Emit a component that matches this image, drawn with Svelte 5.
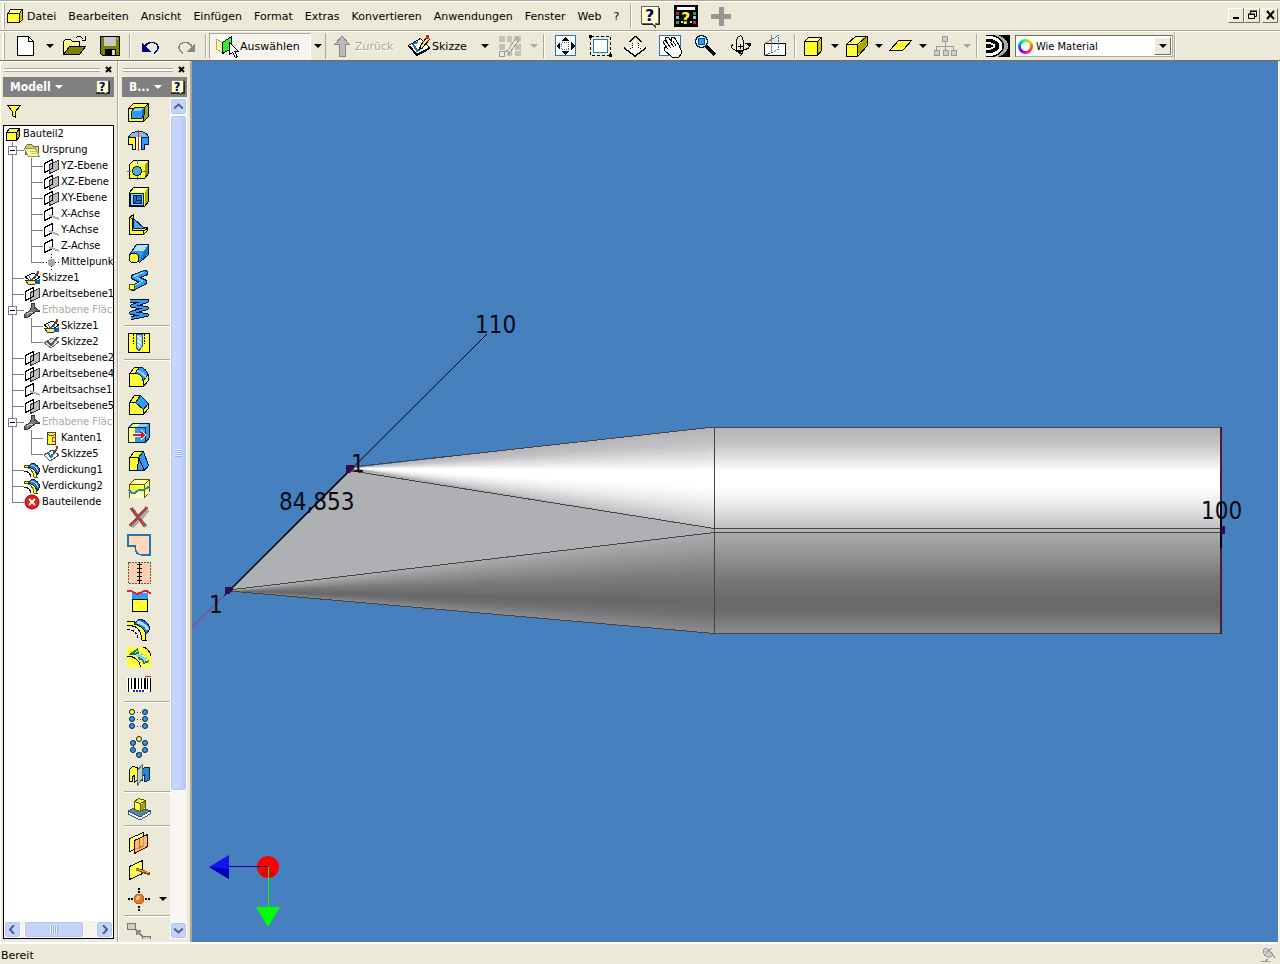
<script>
    const menus = ['Datei', 'Bearbeiten', 'Ansicht', 'Einfügen', 'Format', 'Extras', 'Konvertieren', 'Anwendungen', 'Fenster', 'Web', '?'];

    // 24x24 icons
    const icons = {
        part: '<path d="M3.5 9.5l4-5h13v11l-4 4h-13z" fill="#ff3" stroke="#000"/><path d="M8 5h11l-3 4H5z" fill="#ffffb0"/><path d="M17 10l3-4v9l-3 3z" fill="#c8c020"/><path d="M3.5 9.5h13v10M16.5 9.5l4-5" fill="none" stroke="#000"/>',
        newFile: '<path d="M3.5 2.5h11l5 5v14h-16z" fill="#fff" stroke="#000"/><path d="M14.5 2.5v5h5" fill="none" stroke="#000"/>',
        open: '<path d="M.5 20.5V7.5l2-2h5l2 2h7v5" fill="#ffff99" stroke="#000"/><path d="M.5 20.5l6-8h16l-6 8z" fill="#808000" stroke="#000"/><path d="M12.500 4.5c2-3 5-3 8 1M22.500 2v4h-4" fill="none" stroke="#000"/>',
        save: '<path d="M2.5 2.5h19v19h-17l-2-2z" fill="#808000" stroke="#000"/><path d="M6 3h12v9H6z" fill="#c8c8c8"/><path d="M7 15h11v6H7z" fill="#000"/><path d="M14 16h3v5h-3z" fill="#d8d8d8"/><path d="M19 4h1v1h-1z" fill="#fff"/>',
        undo: '<path d="M6 13c2-6 12-6 13 0 0 3-2 5-4 6" fill="none" stroke="#000080" stroke-width="1.500"/><path d="M3 9v9h9z" fill="#000080"/>',
        redo: '<path d="M18 13c-2-6-12-6-13 0 0 3 2 5 4 6" fill="none" stroke="#888" stroke-width="1.500"/><path d="M21 9v9h-9z" fill="#888"/>',
        select: '<path d="M1 5l7 4v10l-7-4z" fill="#ffff90" stroke="#aa9"/><path d="M2 4l8-3 6 3-8 4z" fill="#fff"/><path d="M7.500 8.500l9-6v12l-9 5z" fill="#3e3" stroke="#000"/><path d="M14.500 8.500v12l3-2 3 5 2-1-3-5h4z" fill="#fff" stroke="#000"/>',
        back: '<path d="M12 2l7 8h-4v12H9V10H5z" fill="#bbb" stroke="#888"/>',
        sketch: '<path d="M1.500 11.500l12-7 9 9-13 7z" fill="#fff" stroke="#000"/><path d="M2 12l8 9 13-7" fill="none" stroke="#000" stroke-width="2"/><path d="M6 10l4 7 6-4M6 10l5-2" fill="none" stroke="#27a" stroke-width="2"/><path d="M12.500 15.500l1-4 6-8 3 2-7 8z" fill="#ffe640" stroke="#000"/><path d="M19 1h3v4h-3z" fill="#c22"/>',
        sketchOff: '<path d="M1 2h6v6H1zM9 2h5v6H9zM1 10h6v6H1zM17 10h6v6h-6zM9 17h5v5H9zM17 17h6v5h-6zM16 2h7v5h-7z" fill="#c4c2b8"/><path d="M1.500 17.500h5v5h-5zM6 18c8-1 4-9 15-15M10 21L22 5" fill="none" stroke="#999"/>',
        fit: '<path d="M2.500 1.500h20v20h-20z" fill="#fff" stroke="#27b"/><path d="M12 3l4 4H8zM12 21l4-4H8zM3 12l4-4v8zM22 12l-4-4v8z" fill="#000"/><path d="M8.500 8.500h7v7h-7z" fill="#fff" stroke="#27b" stroke-dasharray="1 1"/>',
        zoomWindow: '<path d="M2.500 2.500h20v19h-20z" fill="none" stroke="#000" stroke-dasharray="3 2"/><path d="M5.500 5.500h14v13h-14z" fill="#fff" stroke="#27b"/><path d="M1 1h3v3H1zM21 20h3v3h-3z" fill="#000"/>',
        zoomLive: '<path d="M1 14l8-2 3-7 3 7 8 2-11 8z" fill="#fff"/><path d="M12.500 2l6 6M12.500 2l-6 6" fill="none" stroke="#000"/><path d="M9.500 9v4l-2 2M15.500 9v4l2 2" fill="none" stroke="#000" stroke-dasharray="1 1"/><path d="M1 14l11 8 11-8" fill="none" stroke="#000" stroke-width="1.500"/>',
        pan: '<path d="M1.500 1.500h21v20h-21z" fill="#fff" stroke="#27b"/><path d="M5 8l2-2 3 4-3-6 3-1 4 5-1-4 3-1 5 8 3 8-3 4h-7L6 16v-3l3 1z" fill="#fff" stroke="#000"/><path d="M9 9l4 5M12 8l4 5M15 7l3 5" stroke="#000"/>',
        zoomSel: '<path d="M13 12l9 9" stroke="#000" stroke-width="4"/><circle cx="8.500" cy="7.500" r="6" fill="#e8f4ff" stroke="#024" stroke-width="1.500"/><path d="M5.500 4.500h6v6h-6z" fill="#39f" stroke="#04a"/>',
        orbit: '<path d="M9 18C7 8 9 1 13 2c3 2 4 17-1 20M5 10c-7 8 14 9 17 2 1-2-2-3-5-3" fill="none" stroke="#000"/><path d="M12.500 10v5M10 12.500h5" stroke="#000"/><path d="M14 17l-6-1 4 5zM18 9h5l-2 4z" fill="#000"/>',
        lookAt: '<path d="M1.500 9.500h21v12h-21z" fill="#fff" stroke="#000"/><path d="M1.500 9.500l14-8v14l-14 6" fill="none" stroke="#27b" stroke-dasharray="2 1"/><path d="M8.500 18V1M1 10l8-5" fill="none" stroke="#888"/>',
        cube: '<path d="M3.500 7.500l4-4h13v13l-4 5h-13z" fill="#ff3" stroke="#000"/><path d="M17 8l3-4v12l-3 4z" fill="#c8c020"/><path d="M8 4h11l-3 3H5z" fill="#ffffb0"/><path d="M3.500 7.500h13v13M16.500 7.500l4-4" fill="none" stroke="#000"/>',
        cubePersp: '<path d="M1.500 10.500l9-8h12v9l-10 11h-11z" fill="#ff3" stroke="#000"/><path d="M13 11l9-8v8l-9 10z" fill="#b0a800"/><path d="M11 3h10l-9 7H4z" fill="#ffff80"/><path d="M1.500 10.500h11v11M12.500 10.500l9-8" fill="none" stroke="#000"/>',
        plane: '<path d="M1 16l9-10h13l-9 10z" fill="#ff3" stroke="#000"/>',
        tree: '<path d="M9.500 2.500h5v5h-5zM1.500 16.500h5v5h-5zM10.500 16.500h5v5h-5zM18.500 16.500h5v5h-5z" fill="#ccc" stroke="#999"/><path d="M12.500 7v9M3.500 16v-4h17v4" fill="none" stroke="#999"/>',
        zebra: '<path d="M0 1h24v22H0z" fill="#000"/><path d="M0 3c9 0 15 4 15 9s-6 9-15 9" fill="none" stroke="#fff" stroke-width="3"/><path d="M0 9c5 0 8 1 8 3s-3 3-8 3" fill="none" stroke="#fff" stroke-width="2"/><path d="M12 1c8 3 10 7 10 11s-2 8-10 11h-4c8-3 10-7 10-11S16 4 8 1z" fill="#aaa"/>',
        help: '<path d="M3 4h18v17h-4v3l-4-3H3z" fill="#222"/><path d="M2.500 2.500h17v17h-3v3l-3-3h-11z" fill="#ffffd0" stroke="#666"/><text x="6" y="17" font-family="DejaVu Sans, sans-serif" font-size="16" font-weight="bold" fill="#006">?</text>',
        tutor: '<path d="M0 1h24v22H0z" fill="#000"/><path d="M3 3h18v3H3z" fill="#fff"/><path d="M2 8h3v3H2z" fill="#c22"/><path d="M2 12h3v3H2zM19 12h3v3h-3z" fill="#9bd"/><path d="M2 17h3v3H2zM19 8h3v3h-3z" fill="#2a3"/><path d="M19 17h3v3h-3z" fill="#c22"/><path d="M7 17h2v2H7zM16 17h2v2h-2z" fill="#cdc"/><text x="7" y="20" font-family="DejaVu Sans, sans-serif" font-size="16" font-weight="bold" fill="#ff0">?</text>',
        plus: '<path d="M10 3h5v7h7v5h-7v7h-5v-7H2v-5h8z" fill="#959595"/>',
        extrude: '<path d="M1.500 7.500l5-5h15v13l-5 5h-15z" fill="#ff3" stroke="#000"/><path d="M17 8l4-5v12l-4 4z" fill="#b0a800"/><path d="M1.500 7.500h15v13M16.500 7.500l5-5" fill="none" stroke="#000"/><path d="M4.500 10.500l3-4h10v7l-3 4h-10z" fill="#39f" stroke="#024"/><path d="M6 10l2-3h8l-2 3z" fill="#9cf"/><path d="M15 10l2-3v6l-2 3z" fill="#16b"/>',
        revolve: '<path d="M1.500 8.500c3-8 18-8 20 0l-5 2h-10z" fill="#8bd" stroke="#024"/><path d="M1.500 8.500h7v12h-3v-5h-4z" fill="#ff3" stroke="#000"/><path d="M14.500 8.500h7v7h-4v5h-3z" fill="#39f" stroke="#024"/><path d="M9 8h5v12H9z" fill="#fff"/><path d="M11.500 1v21" stroke="#d22"/>',
        hole: '<path d="M2.500 7.500l4-4h15v13l-4 5h-15z" fill="#ff3" stroke="#000"/><path d="M18 8l3-4v12l-3 4z" fill="#a89800"/><path d="M7 4h13l-3 3H4z" fill="#ffffb0"/><path d="M10 3v20M0 14h20" stroke="#27b" stroke-dasharray="4 12"/><circle cx="10" cy="14" r="4.500" fill="#5ad" stroke="#024"/>',
        shell: '<path d="M2.500 7.500l4-5h15v14l-4 5h-15z" fill="#ff3" stroke="#000"/><path d="M18 8l3-5v13l-3 4z" fill="#b0a800"/><path d="M7 3h13l-3 4H4z" fill="#ffffb0"/><path d="M3.500 8.500h13v12h-13z" fill="#9cf" stroke="#024"/><path d="M6.500 10.500h8v8h-8z" fill="#17c" stroke="#024"/><path d="M9.500 11v4.500H14M7 18l3-3" fill="none" stroke="#013"/>',
        rib: '<path d="M2.500 4.500l4-3v12l14 1v3l-4 4h-14z" fill="#ff3" stroke="#000"/><path d="M6.500 5.500v10h11z" fill="#4af" stroke="#024"/><path d="M2.500 4.500l3 1v12h11v4M17 18l4-3" fill="none" stroke="#000"/>',
        loft: '<path d="M2.500 13.500l7-10h12v10l-9 8z" fill="#39e" stroke="#024"/><path d="M10 4h11l-4 6H6z" fill="#bdf"/><path d="M17 10l4-6v9l-8 7z" fill="#17b"/><circle cx="7" cy="17" r="5" fill="#ff3" stroke="#000"/>',
        sweep: '<path d="M6 19L17 13 7 8 18 4" fill="none" stroke="#024" stroke-width="6" stroke-linejoin="round" stroke-linecap="round"/><path d="M6 19L17 13 7 8 18 4" fill="none" stroke="#39e" stroke-width="4" stroke-linejoin="round" stroke-linecap="round"/><path d="M7 17l9-5L7 7l10-4" fill="none" stroke="#9cf"/><circle cx="5" cy="18" r="3" fill="#ff3" stroke="#550"/>',
        coil: '<path d="M3 4h17L5 9l15 2L4 16l16 2-16 3" fill="none" stroke="#013" stroke-width="4" stroke-linejoin="round"/><path d="M3 4h17L5 9l15 2L4 16l16 2-16 3" fill="none" stroke="#39e" stroke-width="2" stroke-linejoin="round"/>',
        thread: '<path d="M1.500 2.500h21v19h-21z" fill="#ff3" stroke="#000"/><path d="M9 3h6v13l-3 4-3-4z" fill="#9cf" stroke="#259"/><path d="M6.500 3v10M17.500 3v10" stroke="#000" stroke-dasharray="2 1"/><path d="M10 5h1v1h1v1h1v1h1M10 9h1v1h1v1h1v1h1M10 13h1v1h1v1h1" fill="none" stroke="#fff"/>',
        fillet: '<path d="M2.500 8.500l5-6h6c4 1 7 4 8 8v5l-5 6h-14z" fill="#ff3" stroke="#000"/><path d="M8 8l5-6c4 1 7 4 8 8l-5 6c0-4-3-7-8-8z" fill="#39e" stroke="#024"/><path d="M10 6c5 1 8 4 9 7" fill="none" stroke="#9cf" stroke-width="2"/><path d="M16.500 16v5M2.500 8.500h5" stroke="#000"/>',
        chamfer: '<path d="M2.500 9.500l5-7h6l8 9v4l-5 6h-14z" fill="#ff3" stroke="#000"/><path d="M8.500 9.500l5-7 8 8-5 6z" fill="#39f" stroke="#024"/><path d="M16.500 16v5M2.500 9.500h6" stroke="#000"/>',
        moveFace: '<path d="M1.500 6.500l4-4h17v14l-4 5h-17z" fill="#39e" stroke="#024"/><path d="M2 7l4-4h6L8 7v14H2z" fill="#ffff70"/><path d="M8 7l4-4h9l-3 4z" fill="#8cf"/><path d="M1.500 6.500h17v15" fill="none" stroke="#024"/><path d="M5 12h9V9l6 5-6 5v-3H5z" fill="#fff"/><path d="M6 14h11M14 11l3 3-3 3" fill="none" stroke="#c22" stroke-width="2"/>',
        draft: '<path d="M2.500 8.500l5-6h9l5 14-4 5h-15z" fill="#ff3" stroke="#000"/><path d="M11.500 8.500l5-6 5 14-4 5h-7z" fill="#39f" stroke="#024"/><path d="M2.500 8.500h9l-1 13M11.500 8.500l6 13" fill="none" stroke="#000"/>',
        split: '<path d="M2.500 7.500l5-5h15v12l-5 6h-15z" fill="#ff3" stroke="#550"/><path d="M3 15h15l4-4v4l-5 6H3z" fill="#ffffc0"/><path d="M8 3h13l-4 4H4z" fill="#ffffb0"/><path d="M2.500 7.500h15v13M17.500 7.500l4-4" fill="none" stroke="#550"/><path d="M2 13c4 5 5 4 8 1s6 2 12-5" fill="none" stroke="#28c" stroke-width="2"/>',
        remove: '<path d="M5 4l14 18M21 5L5 22" stroke="#aaa" stroke-width="4"/><path d="M4 3l14 18M20 2L3 21" stroke="#a84848" stroke-width="3"/>',
        patch: '<path d="M1 2h22v20h-8c-6 0-7-4-7-9H1z" fill="#ffd8bc" stroke="#27a" stroke-width="1.500"/>',
        stitch: '<path d="M1.500 1.500h22v21h-22z" fill="#ffd0b0" stroke="#654" stroke-dasharray="2 1"/><path d="M12.500 1v22" stroke="#000"/><path d="M10 3.500h5M10 7.500h5M10 11.500h5M10 15.500h5M10 19.500h5" stroke="#000"/>',
        replaceFace: '<path d="M5 4h16v7H5z" fill="#39f"/><path d="M5.500 10.500h15v12h-15z" fill="#ff3" stroke="#000"/><path d="M0 2c8-1 7 5 13 2 5-3 7-3 11 1" fill="none" stroke="#d22" stroke-width="2"/>',
        thicken: '<path d="M0 9c9-2 14 4 15 14h4C19 11 14 3 0 5" fill="#ff3" stroke="#000"/><path d="M7 7l5-5c6 1 10 5 11 10l-4 5C17 12 13 8 7 7z" fill="#27d" stroke="#024"/><path d="M10 5c6 1 10 5 11 8" fill="none" stroke="#adf" stroke-width="3"/><path d="M0 13c7-1 10 3 11 9" fill="none" stroke="#000" stroke-dasharray="3 1"/>',
        emboss: '<path d="M0 2h16c4 1 7 5 8 9v11H0z" fill="#ff3"/><path d="M0 11c7 0 12 4 14 11M16 2c4 1 7 5 8 9" fill="none" stroke="#000"/><path d="M11 4L4 9h5l3-2M11 11l2 3 4-1M15 14l2 4 5-2" fill="none" stroke="#178" stroke-width="2"/><path d="M9 10l6 2 4 4M16 9l-4 1M20 13l-4 1" fill="none" stroke="#8cf" stroke-width="2"/>',
        barcode: '<path d="M0 5h24v14H0z" fill="#fff"/><path d="M1 5h1v14H1zM4 5h1v11H4zM7 5h2v11H7zM11 5h1v11h-1zM14 5h1v11h-1zM17 5h2v11h-2zM20 5h1v11h-1zM23 5h1v14h-1z" fill="#000"/><path d="M6 17h2v2H6zM9 17h2v2H9zM12 17h2v2h-2zM15 17h2v2h-2z" fill="#22c"/><path d="M18 3h6v1h-6z" fill="#c22"/>',
        rectPattern: '<path d="M7 5h9M7 12h9M7 19h9" stroke="#c22" stroke-dasharray="1 2"/><g fill="#39e" stroke="#024" shape-rendering="auto"><circle cx="5" cy="5" r="2.500" fill="#ff3"/><circle cx="18" cy="5" r="2.500"/><circle cx="5" cy="12" r="2.500"/><circle cx="18" cy="12" r="2.500"/><circle cx="5" cy="19" r="2.500"/><circle cx="18" cy="19" r="2.500"/></g>',
        circPattern: '<path d="M12 4l6 4v7l-6 5-6-5V8z" fill="none" stroke="#c22" stroke-dasharray="1 2"/><g fill="#39e" stroke="#024" shape-rendering="auto"><circle cx="12" cy="4" r="2.500" fill="#ff3"/><circle cx="18" cy="8" r="2.500"/><circle cx="18" cy="15" r="2.500"/><circle cx="12" cy="20" r="2.500"/><circle cx="6" cy="15" r="2.500"/><circle cx="6" cy="8" r="2.500"/></g>',
        mirror: '<path d="M2.500 6.500l3-3 5 1v12l-3 3v-7l-2 1v5h-3z" fill="#ff3" stroke="#000"/><path d="M14.500 6.500l3-2h5v12l-3 2h-2v-7l-2 2v4h-2z" fill="#28d" stroke="#024"/><path d="M10 8l5-6v14l-5 7z" fill="#bcc" stroke="#567"/>',
        derive: '<path d="M1 14l10-5 12 5-10 6z" fill="#58a" stroke="#357"/><path d="M1 14v3l12 6 10-6v-3l-10 6z" fill="#fff" stroke="#357"/><path d="M7.500 4.500l4-3 7 2v8l-5 3-6-2z" fill="#ff3" stroke="#550"/><path d="M14 7l4-3v7l-4 3z" fill="#b0a000"/><path d="M7.500 4.500l6 2v8M13.500 6.500l5-3" fill="none" stroke="#550"/>',
        workPlane: '<path d="M2.500 7.500l14-6v13l-14 6z" fill="#ff7" stroke="#000"/><path d="M7.500 9.500l13-6v12l-13 7z" fill="#f8b070" fill-opacity=".85" stroke="#310"/><path d="M12.500 8v9l3-2" fill="none" stroke="#b63"/>',
        workAxis: '<path d="M2.500 7.500l13-6v13l-13 6z" fill="#ff5" stroke="#000"/><path d="M9 10l14 5" stroke="#840" stroke-width="3"/><path d="M9 10l13 4" stroke="#f92"/>',
        workPoint: '<circle cx="12" cy="12" r="5" fill="#e87828" stroke="#a62"/><circle cx="11" cy="11" r="2" fill="#fb8"/><path d="M12 1v5M12 19v5M1 12h5M18 12h5" stroke="#000" stroke-width="2" stroke-dasharray="2 1"/>',
        link: '<path d="M.500 2.500h8v6h-8zM15 15h8v5h-8z" fill="#ccc" stroke="#777"/><path d="M9 9l7 7M9.500 14V9.500H14" fill="none" stroke="#888" stroke-width="2"/>'
    };

    // 18x16 icons of the browser tree
    const treeIcons = {
        part: '<path d="M1.500 6.500l3-4h10v8l-3 4h-10z" fill="#ff3" stroke="#000"/><path d="M12 7l2-3v6l-2 3z" fill="#b8b000"/><path d="M1.500 6.500h10v8M11.500 6.500l3-4" fill="none" stroke="#000"/>',
        folder: '<path d="M1.500 12.500v-8l2-2h4l2 2h5v9h-10z" fill="#d8d050" stroke="#665"/><path d="M0 6h11l4 8H4z" fill="#ffff99" stroke="#887"/><path d="M6 9h8M7 11h8" stroke="#cc5"/>',
        plane: '<path d="M1.500 5.500l8-4v9l-8 4z" fill="#fff" stroke="#000"/><path d="M6.500 6.500l9-4v9l-9 4z" fill="#bbb" stroke="#333"/><path d="M9.500 2v8l-3 2" fill="none" stroke="#000"/>',
        axis: '<path d="M1.500 5.500l8-4v9l-8 4z" fill="#fff" stroke="#000"/><path d="M6 9l10 4" stroke="#aaa" stroke-width="2"/>',
        point: '<path d="M8.500 0v16M0 8.500h17" stroke="#000" stroke-dasharray="1 2"/><path d="M6 5h5v1h1v5h-1v1H6v-1H5V6h1z" fill="#a8a8a8"/>',
        sketch: '<path d="M1 7l8-4 7 4-8 5z" fill="#fff" stroke="#000"/><path d="M5 6l2 4 4-2" fill="none" stroke="#27b"/><path d="M1 10h8l3 1-1 3H4z" fill="#fd8" stroke="#430"/><path d="M11 11l5-2v5h-5z" fill="#06a"/><path d="M9 9l5-6" stroke="#444" stroke-width="2"/><path d="M13 1h2v3h-2z" fill="#b22"/>',
        sketchOff: '<path d="M1 9l8-5 7 4-8 6z" fill="#ddd" stroke="#777"/><path d="M4 7l4 4 7-8" fill="none" stroke="#555" stroke-width="2"/>',
        sketchFree: '<path d="M1 9l8-5 7 5-9 6z" fill="#fff" stroke="#555"/><path d="M5 7l3 4 2-3" fill="none" stroke="#27b" stroke-width="2"/><path d="M10 9l4-7" stroke="#555" stroke-width="2"/><path d="M13 0h2v3h-2z" fill="#b22"/>',
        loft: '<path d="M8 1h2c0 4 1 6 6 8l-5 1-7 5-3 1c-1-3 0-5 3-6 3-2 4-5 4-9z" fill="#777" stroke="#333"/><path d="M3 13c1-2 3-3 6-3" fill="none" stroke="#ccc"/>',
        edges: '<path d="M4.500 3.500c0-2 8-2 8 0v10c0 2-8 2-8 0z" fill="#ff3" stroke="#443"/><path d="M5 4c1 2 6 2 7 0" fill="none" stroke="#443"/><path d="M12 7H9v4h3" fill="none" stroke="#e22"/>',
        thicken: '<path d="M0 5c5 0 9 3 10 10h3C13 8 8 3 0 3z" fill="#ff3" stroke="#550"/><path d="M4 5l4-4c4 1 7 4 8 8l-3 4C12 9 9 6 4 5z" fill="#27c" stroke="#024"/><path d="M7 3c4 1 7 4 7 6" fill="none" stroke="#adf"/><path d="M0 9c4 0 6 2 7 6" fill="none" stroke="#000"/>',
        end: '<circle cx="8" cy="8" r="7" fill="#e02018" stroke="#800" shape-rendering="auto"/><path d="M5 5l6 6M11 5l-6 6" stroke="#fff" stroke-width="2" shape-rendering="auto"/>'
    };

    // lines: for each level, v = straight through, t = branch, e = last branch, m = expander
    const tree = [
        { text: 'Bauteil2', icon: 'part', lines: '' },
        { text: 'Ursprung', icon: 'folder', lines: 'm' },
        { text: 'YZ-Ebene', icon: 'plane', lines: 'vt' },
        { text: 'XZ-Ebene', icon: 'plane', lines: 'vt' },
        { text: 'XY-Ebene', icon: 'plane', lines: 'vt' },
        { text: 'X-Achse', icon: 'axis', lines: 'vt' },
        { text: 'Y-Achse', icon: 'axis', lines: 'vt' },
        { text: 'Z-Achse', icon: 'axis', lines: 'vt' },
        { text: 'Mittelpunkt', icon: 'point', lines: 've' },
        { text: 'Skizze1', icon: 'sketch', lines: 't' },
        { text: 'Arbeitsebene1', icon: 'plane', lines: 't' },
        { text: 'Erhabene Fläche1', icon: 'loft', lines: 'm', muted: true },
        { text: 'Skizze1', icon: 'sketch', lines: 'vt' },
        { text: 'Skizze2', icon: 'sketchOff', lines: 've' },
        { text: 'Arbeitsebene2', icon: 'plane', lines: 't' },
        { text: 'Arbeitsebene4', icon: 'plane', lines: 't' },
        { text: 'Arbeitsachse1', icon: 'axis', lines: 't' },
        { text: 'Arbeitsebene5', icon: 'plane', lines: 't' },
        { text: 'Erhabene Fläche2', icon: 'loft', lines: 'm', muted: true },
        { text: 'Kanten1', icon: 'edges', lines: 'vt' },
        { text: 'Skizze5', icon: 'sketchFree', lines: 've' },
        { text: 'Verdickung1', icon: 'thicken', lines: 't' },
        { text: 'Verdickung2', icon: 'thicken', lines: 't' },
        { text: 'Bauteilende', icon: 'end', lines: 'e' }
    ];

    const featureGroups = [
        ['extrude', 'revolve', 'hole', 'shell', 'rib', 'loft', 'sweep', 'coil'],
        ['thread'],
        ['fillet', 'chamfer', 'moveFace', 'draft', 'split', 'remove', 'patch', 'stitch', 'replaceFace', 'thicken', 'emboss', 'barcode'],
        ['rectPattern', 'circPattern', 'mirror'],
        ['derive'],
        ['workPlane', 'workAxis', 'workPoint'],
        ['link']
    ];

    const viewTools = ['fit', 'zoomWindow', 'zoomLive', 'pan', 'zoomSel', 'orbit', 'lookAt'];
    const displayTools = ['cube', 'cubePersp', 'plane', 'tree'];

    // grey levels across the body, [offset, level]
    const upper = [[0, 180], [0.16, 195], [0.32, 228], [0.44, 255], [0.6, 255], [0.76, 236], [0.94, 204], [1, 192]];
    const lower = [[0, 172], [0.22, 148], [0.44, 122], [0.7, 104], [0.82, 112], [1, 140]];

    function level(stops, t) {
        let i = 1;
        while (i < stops.length - 1 && stops[i][0] < t) i++;
        const [t0, a] = stops[i - 1];
        const [t1, b] = stops[i];
        return Math.round(a + ((b - a) * (t - t0)) / (t1 - t0));
    }

    // the cone is shaded as a fan of thin triangles from its tip
    function fan(x, y, top, bottom, stops) {
        const n = 50;
        const step = (bottom - top) / n;
        return Array.from({ length: n }, (_, i) => {
            const g = level(stops, (i + 0.5) / n);
            const y0 = top + i * step;
            return { points: `${x},${y} 522,${y0} 522,${y0 + step + 0.5}`, fill: `rgb(${g},${g},${Math.min(255, g + 2)})` };
        });
    }

    const cone = [...fan(160, 407, 366, 467, upper), ...fan(37, 530, 471, 572, lower)];
</script>

{#snippet icon(name)}
    <svg class="icon" width="24" height="24" viewBox="0 0 24 24" aria-hidden="true">{@html icons[name]}</svg>
{/snippet}

{#snippet drop(off)}
    <button type="button" class="drop" class:off aria-label="Mehr"><i class="caret"></i></button>
{/snippet}

{#snippet chevron(d)}
    <svg width="9" height="9" viewBox="0 0 9 9" aria-hidden="true"><path {d} fill="none" stroke="#4d6185" stroke-width="2" /></svg>
{/snippet}

{#snippet panelHead(title)}
    <div class="grip"><span></span><button type="button" aria-label="Schließen">
        <svg width="7" height="7" viewBox="0 0 7 7"><path d="M1 1l5 5M6 1L1 6" stroke="#000" stroke-width="2" /></svg>
    </button></div>
    <header>
        <button type="button" class="title">{title}<i class="caret"></i></button>
        <button type="button" class="help" aria-label="Hilfe">
            <svg class="icon" width="16" height="16" viewBox="1 1 22 22">{@html icons.help}</svg>
        </button>
    </header>
{/snippet}

<div class="app">
    <nav class="menubar">
        <span class="handle"></span>
        <svg class="icon" width="20" height="20" viewBox="1 1 22 22" aria-hidden="true">{@html icons.part}</svg>
        {#each menus as menu}
            <button type="button" class="menu">{menu}</button>
        {/each}
        <span class="sep"></span>
        {#each ['help', 'tutor', 'plus'] as name}
            <button type="button" class="tool" aria-label={name}>{@render icon(name)}</button>
        {/each}
        <div class="window-buttons">
            <button type="button" aria-label="Minimieren"><svg width="11" height="10"><path d="M2 8h6" stroke="#000" stroke-width="2" /></svg></button>
            <button type="button" aria-label="Wiederherstellen"><svg width="11" height="10"><path d="M3.500 4V1.500h6v5H8M1.500 4.500h6v4h-6zM3 1h7M1 4h7" fill="none" stroke="#000" /></svg></button>
            <button type="button" class="close" aria-label="Schließen"><svg width="11" height="10"><path d="M2 1l7 8M9 1L2 9" stroke="#000" stroke-width="2" /></svg></button>
        </div>
    </nav>

    <div class="toolbar">
        <span class="handle"></span>
        <button type="button" class="tool" aria-label="Neu">{@render icon('newFile')}</button>
        {@render drop()}
        <button type="button" class="tool" aria-label="Öffnen">{@render icon('open')}</button>
        <button type="button" class="tool" aria-label="Speichern">{@render icon('save')}</button>
        <span class="sep"></span>
        <button type="button" class="tool" aria-label="Rückgängig">{@render icon('undo')}</button>
        <button type="button" class="tool" aria-label="Wiederholen">{@render icon('redo')}</button>
        <span class="sep"></span>
        <button type="button" class="labelled pressed">{@render icon('select')}Auswählen</button>
        <div class="pressed-drop">{@render drop()}</div>
        <button type="button" class="labelled back" disabled>{@render icon('back')}Zurück</button>
        <button type="button" class="labelled sketch">{@render icon('sketch')}Skizze</button>
        {@render drop()}
        <button type="button" class="tool" aria-label="Skizze abrufen">{@render icon('sketchOff')}</button>
        {@render drop(true)}
        <span class="sep"></span>
        {#each viewTools as name}
            <button type="button" class="tool" aria-label={name}>{@render icon(name)}</button>
        {/each}
        <span class="sep"></span>
        {#each displayTools as name}
            <button type="button" class="tool narrow" aria-label={name}>{@render icon(name)}</button>
            {@render drop(name === 'tree')}
        {/each}
        <span class="sep"></span>
        <button type="button" class="tool" aria-label="Zebra">{@render icon('zebra')}</button>
        <div class="combo">
            <span class="wheel"></span>
            <select aria-label="Farbe">
                <option>Wie Material</option>
            </select>
            <span class="combo-arrow"><i class="caret"></i></span>
        </div>
        <span class="sep end"></span>
    </div>

    <main>
        <aside class="model">
            {@render panelHead('Modell')}
            <button type="button" class="filter" aria-label="Filter">
                <svg class="icon" width="15" height="13" viewBox="0 0 15 13"><path d="M.500 .500h13l-5 6v6l-3-2V6.500z" fill="#ff3" stroke="#000" /></svg>
            </button>
            <div class="tree">
                <ul>
                    {#each tree as row}
                        <li class:muted={row.muted}>
                            {#each row.lines as line}
                                <span class="line {line}">{#if line === 'm'}<button type="button" aria-label="Reduzieren"></button>{/if}</span>
                            {/each}
                            <svg class="icon" width="18" height="16" viewBox="0 0 18 16" aria-hidden="true">{@html treeIcons[row.icon]}</svg>
                            <span>{row.text}</span>
                        </li>
                    {/each}
                </ul>
                <div class="scroll-x">
                    <button type="button" class="xp" aria-label="Links">{@render chevron('M6 0L2 4.500 6 9')}</button>
                    <span class="xp thumb"><i></i></span>
                    <button type="button" class="xp" aria-label="Rechts">{@render chevron('M3 0l4 4.500L3 9')}</button>
                </div>
            </div>
        </aside>

        <aside class="features">
            {@render panelHead('B...')}
            <div class="body">
                <div class="list">
                    {#each featureGroups as group}
                        <div class="group">
                            {#each group as name}
                                <div class="feature">
                                    <button type="button" aria-label={name}>{@render icon(name)}</button>
                                    {#if name === 'workPoint'}{@render drop()}{/if}
                                </div>
                            {/each}
                        </div>
                    {/each}
                </div>
                <div class="scroll-y">
                    <button type="button" class="xp" aria-label="Nach oben">{@render chevron('M0 6.500l4.500-4 4.500 4')}</button>
                    <span class="xp thumb"><i></i></span>
                    <span class="rest"></span>
                    <button type="button" class="xp" aria-label="Nach unten">{@render chevron('M0 2.500l4.500 4 4.500-4')}</button>
                </div>
            </div>
        </aside>

        <section class="view">
            <svg viewBox="0 0 1086 881" role="img" aria-label="Bauteil2">
                <defs>
                    <linearGradient id="upper" x1="0" y1="0" x2="0" y2="1">
                        {#each upper as [offset, g]}
                            <stop {offset} stop-color="rgb({g},{g},{Math.min(255, g + 2)})" />
                        {/each}
                    </linearGradient>
                    <linearGradient id="lower" x1="0" y1="0" x2="0" y2="1">
                        {#each lower as [offset, g]}
                            <stop {offset} stop-color="rgb({g},{g},{g + 2})" />
                        {/each}
                    </linearGradient>
                </defs>
                <g shape-rendering="crispEdges">
                    <path d="M160 407L522 467v5L37 530z" fill="#afb0b3" />
                    {#each cone as slice}
                        <polygon points={slice.points} fill={slice.fill} />
                    {/each}
                    <rect x="522" y="366" width="507" height="101" fill="url(#upper)" />
                    <rect x="522" y="467" width="507" height="4" fill="#b6b8b6" />
                    <rect x="522" y="471" width="507" height="101" fill="url(#lower)" />
                    <path d="M160 406L522.500 366H1029M160 410L522.500 467.500H1029M37 529L522.500 471.500H1029M37 530L522.500 572.500H1029M522.500 366v206" fill="none" stroke="#444" />
                    <path d="M1029 366v207" stroke="#402040" stroke-width="2" />
                    <path d="M1029 440v47" stroke="#000" stroke-width="2" />
                </g>
                <path d="M0 566l37-36" stroke="#a02870" />
                <path d="M32 535l263-262" stroke="#000" />
                <path d="M37 530l122-122" stroke="#000018" stroke-width="1.500" />
                <path d="M154 404h8v4l-4 4h-4zM33 526h8v3l-4 4h-4zM1029 465h4v8h-4z" fill="#36084c" />
                <g class="dims">
                    <text x="283" y="272">110</text>
                    <text x="159" y="411">1</text>
                    <text x="87" y="449">84,853</text>
                    <text x="17" y="552">1</text>
                    <text x="1009" y="458">100</text>
                </g>
                <circle cx="76" cy="806" r="11" fill="#f00" />
                <path d="M76 806l8 7a11 11 0 0 1-16 0z" fill="#e80000" />
                <path d="M37 805.500h39" stroke="#0000b0" />
                <path d="M17 806l20-12v24z" fill="#1414ee" />
                <path d="M17 806l20 2v10z" fill="#0000b8" />
                <path d="M76.500 806v40" stroke="#0f0" />
                <path d="M64 846h24l-12 20z" fill="#0f0" />
            </svg>
        </section>
    </main>

    <footer>
        <span>Bereit</span>
        <svg class="icon" width="16" height="16" viewBox="0 0 16 16" aria-hidden="true">
            <path d="M3 3c2-3 6-1 10 5-3 4-10 2-10-5z" fill="#ccc" stroke="#999" />
            <path d="M6 6l6-5M8 12l-3 2M1 14h9M13 8l2 3" stroke="#999" fill="none" />
        </svg>
    </footer>
</div>

<style>
    :global(body) {
        margin: 0;
        background: #ece9d8;
    }
    .app {
        display: flex;
        flex-direction: column;
        height: 100vh;
        overflow: hidden;
        background: #ece9d8;
        color: #000;
        font-family: 'DejaVu Sans', Verdana, sans-serif;
        font-size: 11px;
    }
    button {
        display: flex;
        align-items: center;
        justify-content: center;
        margin: 0;
        padding: 0;
        border: 0;
        background: none;
        color: inherit;
        font: inherit;
        flex: none;
    }
    svg {
        display: block;
        flex: none;
    }
    .icon {
        shape-rendering: crispEdges;
    }
    .caret {
        display: inline-block;
        border: 4px solid transparent;
        border-top-color: #000;
        border-bottom: 0;
    }
    .menubar,
    .toolbar {
        display: flex;
        flex: none;
        align-items: center;
        box-sizing: border-box;
        height: 31px;
        border-bottom: 1px solid #aca899;
    }
    .menubar {
        border-top: 1px solid #aca899;
        box-shadow: inset 0 1px #fff;
        padding-top: 1px;
    }
    .toolbar {
        height: 30px;
        border-top: 1px solid #fff;
        border-bottom-color: #716f64;
    }
    .handle {
        align-self: stretch;
        width: 2px;
        margin: 1px 0 1px 2px;
        border-right: 1px solid #aca899;
        background: #fff;
    }
    .toolbar .handle {
        margin-right: 3px;
    }
    .menubar > .icon {
        margin-right: -4px;
    }
    .menu {
        height: 22px;
        padding: 0 6px;
    }
    .menubar .sep {
        margin-left: 5px;
        margin-right: 1px;
    }
    .sep {
        flex: none;
        width: 1px;
        height: 24px;
        margin: 0 2px;
        border-left: 1px solid #aca899;
        background: #fff;
    }
    .sep.end {
        align-self: stretch;
        height: auto;
        margin: 0 1px;
    }
    .tool {
        width: 35px;
        height: 26px;
    }
    .narrow {
        width: 30px;
    }
    .drop {
        width: 14px;
        height: 26px;
    }
    .off .caret {
        border-top-color: #aca899;
    }
    .window-buttons {
        display: flex;
        margin: 0 2px 2px auto;
    }
    .window-buttons button {
        width: 16px;
        height: 15px;
        box-sizing: border-box;
        border: 1px solid;
        border-color: #fff #716f64 #716f64 #fff;
    }
    .window-buttons .close {
        margin-left: 2px;
    }
    .labelled {
        justify-content: flex-start;
        height: 26px;
    }
    .pressed {
        gap: 1px;
        box-sizing: border-box;
        width: 102px;
        padding-left: 5px;
        border: 1px solid;
        border-color: #aca899 #fff #fff #aca899;
        background: #f6f4ec;
    }
    .pressed-drop {
        border-right: 1px solid #aca899;
    }
    .back {
        gap: 1px;
        width: 75px;
        padding-left: 4px;
        color: #aca899;
        text-shadow: 1px 1px #fff;
    }
    .sketch {
        gap: 1px;
        width: 71px;
        margin-left: 6px;
    }
    .combo {
        display: flex;
        align-items: center;
        box-sizing: border-box;
        width: 158px;
        height: 22px;
        border: 1px solid;
        border-color: #716f64 #aca899 #aca899 #716f64;
        background: #fff;
    }
    .wheel {
        flex: none;
        width: 7px;
        height: 7px;
        margin: 0 3px 0 2px;
        padding: 4px;
        border-radius: 50%;
        background: radial-gradient(circle, #fff 4px, transparent 5px), conic-gradient(#4f4, #fc0, #f60, #f33, #e0e, #60f, #06f, #0cc, #4f4);
    }
    select {
        flex: 1;
        min-width: 0;
        padding: 0;
        border: 0;
        background: none;
        appearance: none;
        color: #000;
        font: 11px 'DejaVu Sans Condensed', Tahoma, sans-serif;
    }
    .combo-arrow {
        display: flex;
        align-items: center;
        justify-content: center;
        box-sizing: border-box;
        width: 17px;
        height: 18px;
        margin-right: 1px;
        border: 1px solid;
        border-color: #fff #716f64 #716f64 #fff;
        background: #ece9d8;
        pointer-events: none;
    }
    main {
        display: flex;
        flex: 1;
        min-height: 0;
    }
    aside {
        display: flex;
        flex: none;
        flex-direction: column;
        box-sizing: border-box;
        border-right: 1px solid #aca899;
        box-shadow: inset 1px 1px #fff;
    }
    .model {
        width: 118px;
        padding: 5px 3px 3px;
        font-family: 'DejaVu Sans Condensed', Tahoma, sans-serif;
    }
    .features {
        width: 74px;
        padding: 5px 3px 3px 4px;
        border-right: 2px solid #aca899;
    }
    .grip {
        display: flex;
        align-items: center;
        gap: 5px;
        height: 7px;
        margin: 0 2px 4px 1px;
    }
    .grip span {
        flex: 1;
        height: 2px;
        border: 1px solid #aca899;
        border-width: 1px 0;
        background: #fff;
    }
    header {
        display: flex;
        flex: none;
        align-items: center;
        justify-content: space-between;
        height: 20px;
        padding: 0 3px 0 7px;
        background: #808080;
        color: #fff;
        font: bold 12px 'DejaVu Sans Condensed', Tahoma, sans-serif;
    }
    .features header {
        padding-right: 1px;
    }
    .title {
        gap: 4px;
    }
    .title .caret {
        border-top-color: #fff;
    }
    .filter {
        align-self: flex-start;
        height: 28px;
        padding: 0 4px;
    }
    .tree {
        display: flex;
        flex: 1;
        flex-direction: column;
        min-height: 0;
        border: 1px solid #000;
        background: #fff;
    }
    ul {
        flex: 1;
        min-height: 0;
        margin: 0;
        padding: 0;
        overflow: hidden;
        list-style: none;
    }
    li {
        display: flex;
        height: 16px;
        line-height: 16px;
        white-space: nowrap;
    }
    li > .icon {
        margin-left: 1px;
    }
    .muted {
        color: #aca899;
    }
    .line {
        position: relative;
        flex: none;
        width: 19px;
        height: 16px;
    }
    .line::before,
    .line.t::after,
    .line.e::after,
    .line.m::after {
        position: absolute;
        top: 0;
        left: 8px;
        width: 1px;
        height: 16px;
        background: #808080;
        content: '';
    }
    .line.e::before {
        height: 8px;
    }
    .line.t::after,
    .line.e::after,
    .line.m::after {
        top: 8px;
        width: 12px;
        height: 1px;
    }
    .line button {
        position: absolute;
        z-index: 1;
        top: 4px;
        left: 4px;
        width: 9px;
        height: 9px;
        border: 1px solid #808080;
        background: linear-gradient(#000, #000) center / 5px 1px no-repeat #fff;
    }
    .xp {
        display: flex;
        flex: none;
        align-items: center;
        justify-content: center;
        box-sizing: border-box;
        width: 17px;
        height: 17px;
        border: 1px solid #fff;
        border-radius: 3px;
        background: #c3d3fc;
        box-shadow: inset 0 0 0 1px #b0c4f4;
    }
    .scroll-x {
        display: flex;
        justify-content: space-between;
        height: 17px;
        background: #f4f3ee;
    }
    .scroll-x .thumb {
        width: 60px;
        margin-right: 10px;
    }
    .scroll-x .thumb i {
        width: 8px;
        height: 7px;
        background: repeating-linear-gradient(90deg, #eef4fe 0 1px, #8cb0f8 1px 2px);
    }
    .scroll-y {
        display: flex;
        flex-direction: column;
        width: 17px;
        background: #f7f6f2;
    }
    .scroll-y .thumb {
        flex: 674 1 0;
        min-height: 0;
        background: linear-gradient(90deg, #cbd8fd, #c3d3fc 60%, #b4c8f6);
    }
    .scroll-y .thumb i {
        width: 7px;
        height: 8px;
        background: repeating-linear-gradient(#eef4fe 0 1px, #8cb0f8 1px 2px);
    }
    .rest {
        flex: 131 1 0;
    }
    .body {
        display: flex;
        flex: 1;
        min-height: 0;
        padding-top: 1px;
    }
    .list {
        flex: 1;
        min-width: 0;
        margin-left: 2px;
        padding-top: 1px;
        overflow: hidden;
    }
    .group + .group {
        margin-top: 2px;
        padding-top: 2px;
        border-top: 1px solid #aca899;
        box-shadow: inset 0 1px #fff;
    }
    .group + .group::before {
        display: block;
        height: 1px;
        content: '';
    }
    .feature {
        display: flex;
        align-items: center;
        height: 28px;
        padding-left: 3px;
    }
    .feature button {
        height: 28px;
    }
    .feature .drop {
        margin-left: 5px;
    }
    .view {
        flex: 1;
        min-width: 0;
        border-right: 2px solid #f4f3ee;
        background: #4680bf;
    }
    .view > svg {
        width: 100%;
        height: 100%;
    }
    .dims {
        fill: #0a0a14;
        font-family: 'DejaVu Sans Condensed', Tahoma, sans-serif;
        font-size: 24px;
    }
    footer {
        display: flex;
        flex: none;
        align-items: center;
        justify-content: space-between;
        box-sizing: border-box;
        height: 22px;
        padding: 2px 4px 0 1px;
        border-top: 2px solid #fff;
    }
</style>
